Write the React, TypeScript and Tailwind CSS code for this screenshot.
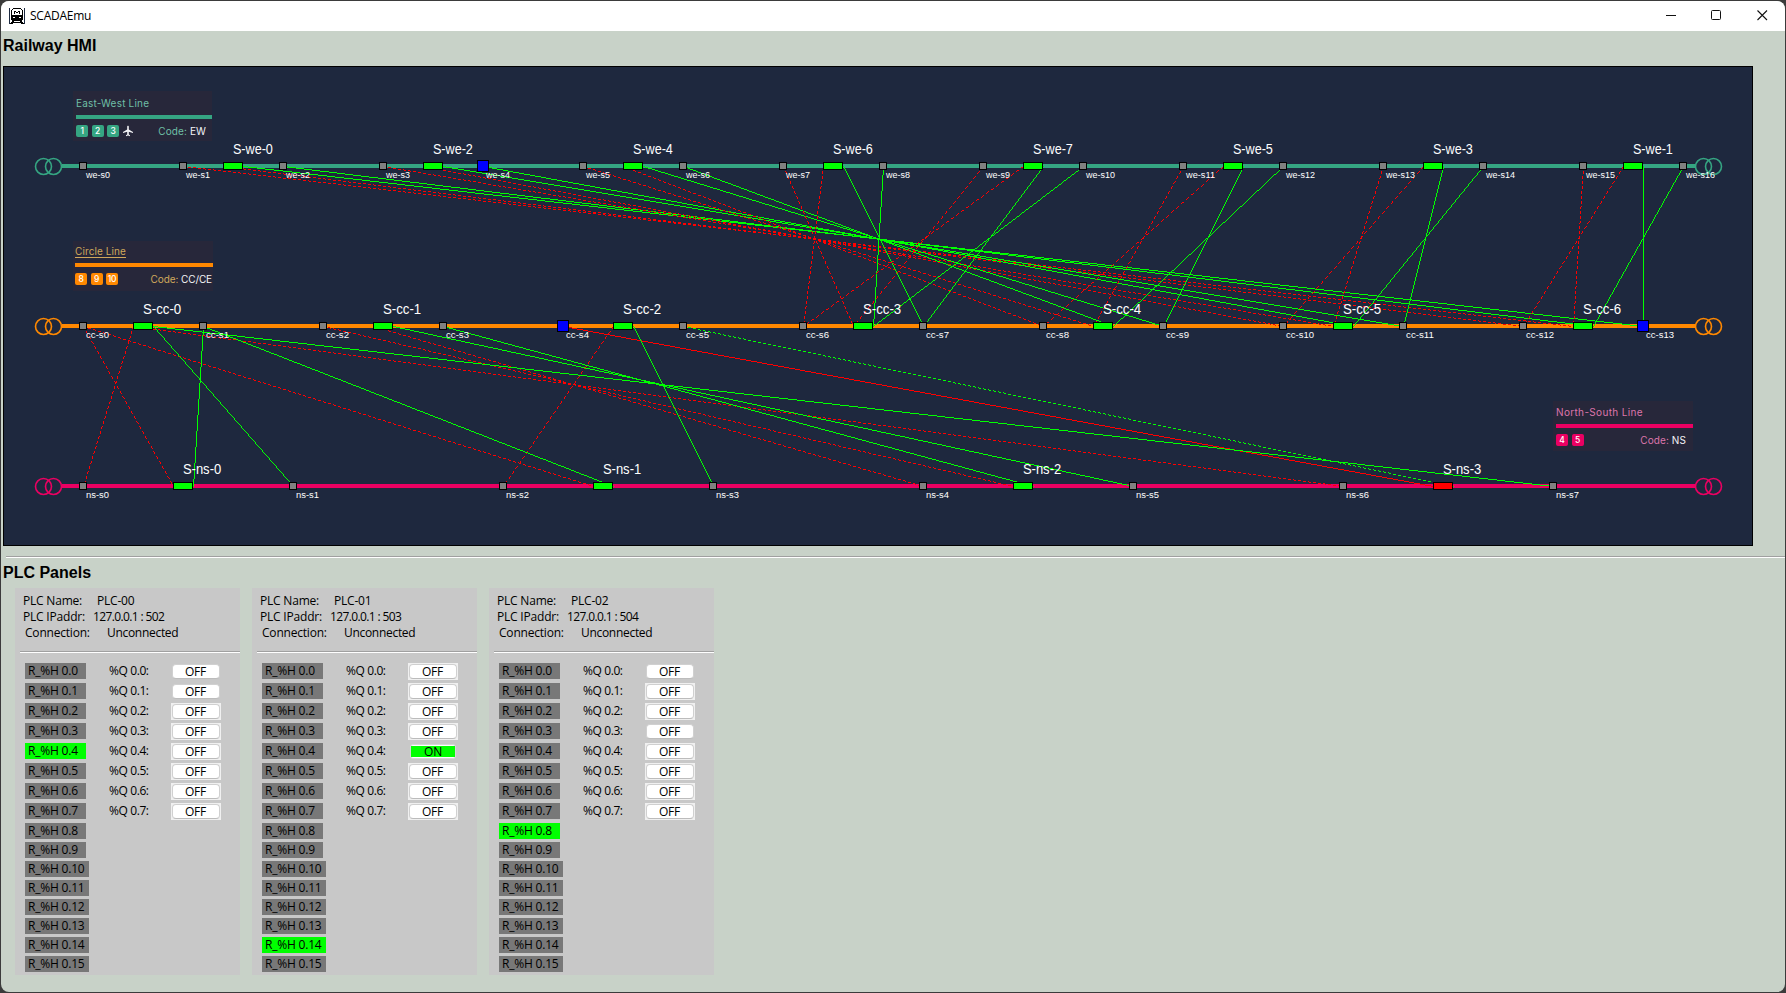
import React from "react";

type Tone = "we" | "cc" | "ns";

const TRACK_Y: Record<Tone, number> = { we: 100, cc: 260, ns: 420 };
const TRACK_COLOR: Record<Tone, string> = { we: "#35a582", cc: "#ff8800", ns: "#eb0062" };

const weSensors = Array.from({ length: 17 }, (_, i) => 80 + i * 100);
const ccSensors = Array.from({ length: 14 }, (_, i) => 80 + i * 120);
const nsSensors = Array.from({ length: 8 }, (_, i) => 80 + i * 210);

const sensors: Record<Tone, number[]> = { we: weSensors, cc: ccSensors, ns: nsSensors };
const occupied = new Set(["we-s4", "cc-s4", "cc-s13"]);

const signals: { tone: Tone; x: number; name: string; alert?: boolean }[] = [
  ...[0, 2, 4, 6, 7, 5, 3, 1].map((n, i) => ({ tone: "we" as Tone, x: 230 + i * 200, name: `S-we-${n}` })),
  ...[0, 1, 2, 3, 4, 5, 6].map((n) => ({ tone: "cc" as Tone, x: 140 + n * 240, name: `S-cc-${n}` })),
  ...[0, 1, 2, 3].map((n) => ({ tone: "ns" as Tone, x: 180 + n * 420, name: `S-ns-${n}`, alert: n === 3 })),
];

type Link = [x1: number, x2: number, green: boolean, dotted: boolean];

const red = (a: number, b: number): Link => [a, b, false, true];
const green = (a: number, b: number): Link => [a, b, true, false];

const upperLinks: Link[] = [];
[
  [0, 12],
  [1, 10],
  [2, 8],
  [3, 6],
  [4, 6],
  [5, 8],
  [6, 10],
  [7, 12],
].forEach(([i, s]) => {
  const x = 230 + i * 200;
  const target = 140 + (s / 2) * 240;
  upperLinks.push(red(x - 10, ccSensors[s]));
  upperLinks.push(red(weSensors[i * 2 + 1], target - 10));
  upperLinks.push(green(x + 10, ccSensors[s + 1]));
  upperLinks.push(green(weSensors[i * 2 + 2], target + 10));
});

const lowerLinks: Link[] = [
  red(130, 80),
  red(130, 1340),
  red(370, 920),
  red(610, 500),
  red(80, 170),
  red(80, 590),
  red(320, 1010),
  [560, 1430, false, false],
  green(150, 290),
  green(150, 1550),
  green(390, 1130),
  green(630, 710),
  green(200, 190),
  green(200, 610),
  green(440, 1030),
  [680, 1450, true, true],
];

/** One-pixel stepped line between two points; dotted lines draw three pixels and skip two. */
function pixelLine(x1: number, y1: number, x2: number, y2: number, dotted: boolean) {
  const steps = Math.max(Math.abs(x2 - x1), Math.abs(y2 - y1));
  let d = "";
  let runX = 0;
  let runY = 0;
  let min = 0;
  let max = -1;
  const flush = () => {
    if (max >= min) d += `M${min} ${runY}h${max - min + 1}v1h${min - max - 1}z`;
    max = min - 1;
  };
  for (let i = 0; i <= steps; i++) {
    if (dotted && i % 5 > 2) {
      flush();
      continue;
    }
    const x = Math.round(x1 + ((x2 - x1) * i) / steps);
    const y = Math.round(y1 + ((y2 - y1) * i) / steps);
    if (max >= min && y === runY && Math.abs(x - runX) <= 1) {
      min = Math.min(min, x);
      max = Math.max(max, x);
    } else {
      flush();
      min = x;
      max = x;
      runY = y;
    }
    runX = x;
  }
  flush();
  return d;
}

function Links({ links, from, to }: { links: Link[]; from: number; to: number }) {
  return (
    <g>
      {links.map(([a, b, isGreen, dotted], i) => (
        <path key={i} d={pixelLine(a, from, b, to, dotted)} fill={isGreen ? "#00ff00" : "#ff0000"} />
      ))}
    </g>
  );
}

function Track({ tone }: { tone: Tone }) {
  const y = TRACK_Y[tone];
  const c = TRACK_COLOR[tone];
  return (
    <g>
      <rect x={59} y={y - 2} width={1634} height={4} fill={c} />
      {[40.5, 50.5, 1700.5, 1710.5].map((x) => (
        <circle key={x} cx={x} cy={y + 0.5} r={8} fill="none" stroke={c} strokeWidth={1.6} />
      ))}
    </g>
  );
}

function RailMap() {
  return (
    <svg width={1750} height={480} className="block" fontFamily="'Liberation Sans', Arial, sans-serif">
      <rect x={0.5} y={0.5} width={1749} height={479} fill="#1e283e" stroke="#000" />
      <Track tone="we" />
      <Track tone="cc" />
      <Track tone="ns" />
      <Links links={upperLinks} from={100} to={260} />
      <Links links={lowerLinks} from={260} to={420} />
      {(["we", "cc", "ns"] as Tone[]).map((tone) =>
        sensors[tone].map((x, i) => {
          const name = `${tone}-s${i}`;
          const y = TRACK_Y[tone];
          const h = occupied.has(name) ? 6 : 4;
          return (
            <g key={name}>
              <rect
                x={x - h + 0.5}
                y={y - h + 0.5}
                width={h * 2 - 1}
                height={h * 2 - 1}
                fill={h === 6 ? "#0000ff" : "#808080"}
                stroke="#000"
              />
              <text
                x={x + 3}
                y={y + 12}
                fontSize={9.6}
                fill="#fff"
                textLength={(tone === "we" ? 24 : 23) + (i > 9 ? 5 : 0)}
                lengthAdjust="spacingAndGlyphs"
              >
                {name}
              </text>
            </g>
          );
        })
      )}
      {signals.map((s) => (
        <g key={s.name}>
          <rect
            x={s.x - 9.5}
            y={TRACK_Y[s.tone] - 3.5}
            width={19}
            height={7}
            fill={s.alert ? "#ff0000" : "#00ff00"}
            stroke="#000"
          />
          <text
            x={s.x - 0.1}
            y={TRACK_Y[s.tone] - 12}
            fontSize={13.8}
            fill="#fff"
            textLength={s.tone === "we" ? 40 : 38.3}
            lengthAdjust="spacingAndGlyphs"
          >
            {s.name}
          </text>
        </g>
      ))}
    </svg>
  );
}

function Plane() {
  return (
    <svg viewBox="0 0 24 24" className="-ml-[0.5px] h-[12px] w-[12px]" fill="#f4f4f6">
      <path d="M12 1.5c-.9 0-1.6.9-1.6 2V9L2 14v2.2l8.4-2.6v5.2L8 20.7v1.6l4-1.1 4 1.1v-1.6l-2.4-1.9v-5.2l8.4 2.6V14l-8.4-5V3.5c0-1.1-.7-2-1.6-2z" />
    </svg>
  );
}

interface LegendProps {
  title: string;
  chips: string[];
  code: string;
  place: string;
  text: string;
  fill: string;
  titleStyle: string;
  codeStyle: string;
  plane?: boolean;
}

function Legend({ title, chips, code, place, text, fill, titleStyle, codeStyle, plane }: LegendProps) {
  return (
    <div className={`absolute h-[50px] bg-[#27273a] font-['Inter',sans-serif] ${place}`}>
      <div className={`text-[10px] leading-[16px] whitespace-nowrap ${text} ${titleStyle}`}>{title}</div>
      <div className={`h-[4px] ${fill}`} />
      <div className="mt-[6px] flex h-[12px] items-center gap-[3.5px]">
        {chips.map((c) => (
          <span
            key={c}
            className={`flex h-[12px] w-[12px] items-center justify-center rounded-[2px] text-[8.5px] font-medium tracking-[-0.3px] text-white ${fill}`}
          >
            {c}
          </span>
        ))}
        {plane && <Plane />}
        <span className={`ml-auto text-[10px] leading-[12px] whitespace-nowrap ${codeStyle}`}>
          <span className={text}>Code:</span> <span className="text-[#f4f4f6]">{code}</span>
        </span>
      </div>
    </div>
  );
}

function TrainIcon() {
  return (
    <svg width={16} height={16} viewBox="0 0 16 16" shapeRendering="crispEdges">
      <rect width={16} height={16} fill="#fff" />
      <path d="M0 0h1v16h-1zM15 0h1v16h-1z" fill="#1c2940" />
      <path
        fill="#000"
        d="M4 0h8v1h-8zM3 1h1v1h-1zM12 1h1v1h-1zM2 2h1v10h-1zM13 2h1v10h-1zM5 3h1v3h-1zM10 3h1v3h-1zM6 3h1v1h-1zM9 3h1v1h-1zM7 4h2v1h-2zM3 7h10v2h-10zM3 9h1v1h-1zM12 9h1v1h-1zM6 9h4v1h-4zM3 10h10v2h-10zM3 12h10v1h-10zM3 13h2v1h-2zM11 13h2v1h-2zM2 14h12v1h-12zM1 15h3v1h-3zM12 15h3v1h-3z"
      />
    </svg>
  );
}

function TitleBar() {
  return (
    <div className="flex h-[30px] items-center bg-white pr-[16px] pb-px pl-[8px]">
      <TrainIcon />
      <span className="mt-px ml-[5px] text-[12px] tracking-[-0.25px] text-black">SCADAEmu</span>
      <svg width={104} height={12} className="-mt-px ml-auto" fill="none" stroke="#111">
        <path d="M1 6.5h10" />
        <rect x="46.5" y="1.5" width="9" height="9" rx="1" />
        <path d="M92.5 1.5l9.5 9.5M102 1.5l-9.5 9.5" strokeWidth="1.1" />
      </svg>
    </div>
  );
}

function Rule({ className }: { className: string }) {
  return <div className={`h-[2px] border-t border-b border-t-[#a0a0a0] border-b-white ${className}`} />;
}

interface Plc {
  name: string;
  port: number;
  activeRegister: number;
  on?: number;
  plain: number[];
}

const plcs: Plc[] = [
  { name: "PLC-00", port: 502, activeRegister: 4, plain: [0, 1] },
  { name: "PLC-01", port: 503, activeRegister: 14, on: 4, plain: [4] },
  { name: "PLC-02", port: 504, activeRegister: 8, plain: [0, 3] },
];

function CoilButton({ on, plain }: { on: boolean; plain: boolean }) {
  return (
    <div className={`h-[17px] w-[50px] p-px ${plain ? "" : "bg-[#f0f0f0]"}`}>
      {on ? (
        <div className="mx-px flex h-[15px] rounded-[3px] border border-[#d6d6d6] bg-white pt-px">
          <div className="mx-auto h-[11px] w-[44px] bg-[#00ff00] text-center leading-[11px]">ON</div>
        </div>
      ) : (
        <div className="h-[15px] rounded-[4px] border border-[#d0d0d0] border-b-[#bcbcbc] bg-white pr-px text-center leading-[14px]">
          OFF
        </div>
      )}
    </div>
  );
}

function PlcPanel({ plc }: { plc: Plc }) {
  return (
    <section className="h-[387px] w-[225px] bg-[#c8c8c8] pt-[5px] text-[12px] leading-[16px] tracking-[-0.2px] text-black">
      <div className="flex pl-[8px]">
        <span className="w-[74px]">PLC Name:</span>
        <span>{plc.name}</span>
      </div>
      <div className="flex pl-[8px]">
        <span className="w-[70px]">PLC IPaddr:</span>
        <span className="tracking-[-0.62px]">127.0.0.1 : {plc.port}</span>
      </div>
      <div className="flex pl-[10px]">
        <span className="w-[82px]">Connection:</span>
        <span className="tracking-[-0.3px]">Unconnected</span>
      </div>
      <Rule className="mt-[10px] ml-[5px]" />
      <div className="mt-[10px] flex pl-[10px]">
        <div className="flex w-[84px] flex-col items-start">
          {Array.from({ length: 16 }, (_, i) => (
            <div
              key={i}
              className={`h-[16px] pl-[3px] leading-[15px] ${i < 8 ? "mb-[4px]" : "mb-[3px]"} ${
                i < 10 ? "w-[61px]" : "w-[64px]"
              } ${i === plc.activeRegister ? "bg-[#00ff00]" : "bg-[#787878]"}`}
            >
              R_%H 0.{i}
            </div>
          ))}
        </div>
        <div>
          {Array.from({ length: 8 }, (_, i) => (
            <div key={i} className="flex h-[20px]">
              <span className="w-[62px] leading-[15px] tracking-[-0.4px]">%Q 0.{i}:</span>
              <CoilButton on={plc.on === i} plain={plc.plain.includes(i)} />
            </div>
          ))}
        </div>
      </div>
    </section>
  );
}

export default function App() {
  return (
    <div className="h-[993px] w-[1786px] overflow-hidden bg-[#3b3b3b] p-px font-['Open_Sans','Noto_Sans',sans-serif]">
      <div className="flex h-[991px] w-[1784px] flex-col overflow-hidden rounded-[8px] bg-[#c8d2c8]">
        <TitleBar />
        <h1 className="h-[35px] pl-[2px] font-['Liberation_Sans',Arial,sans-serif] text-[16px] leading-[29px] font-bold text-black">
          Railway HMI
        </h1>
        <div className="relative ml-[2px] h-[480px] w-[1750px]">
          <RailMap />
          <Legend
            title="East-West Line"
            chips={["1", "2", "3"]}
            code="EW"
            place="top-[25px] left-[70px] w-[139px] pl-[3px]"
            text="text-[#6fbfa6]"
            fill="bg-[#35a582]"
            titleStyle="h-[24px] pt-[3.5px] tracking-[0.2px]"
            codeStyle="pr-[6px] tracking-[0.1px]"
            plane
          />
          <Legend
            title="Circle Line"
            chips={["8", "9", "10"]}
            code="CC/CE"
            place="top-[175px] left-[70px] w-[140px] pl-[2px]"
            text="text-[#d0a75a]"
            fill="bg-[#ff8800]"
            titleStyle="h-[22px] pt-[2px] underline underline-offset-2 tracking-[0.1px]"
            codeStyle="pr-[1px] tracking-[-0.1px]"
          />
          <Legend
            title="North-South Line"
            chips={["4", "5"]}
            code="NS"
            place="top-[335px] left-[1550px] w-[140px] pl-[3px]"
            text="text-[#dd75ab]"
            fill="bg-[#eb0062]"
            titleStyle="h-[23px] pt-[3px] tracking-[0.35px]"
            codeStyle="pr-[7px] tracking-[0.1px]"
          />
        </div>
        <Rule className="mt-[10px] ml-[5px] shrink-0" />
        <h2 className="h-[30px] pl-[2px] font-['Liberation_Sans',Arial,sans-serif] text-[16px] leading-[29px] font-bold text-black">
          PLC Panels
        </h2>
        <div className="flex gap-[12px] pl-[14px]">
          {plcs.map((p) => (
            <PlcPanel key={p.name} plc={p} />
          ))}
        </div>
      </div>
    </div>
  );
}
